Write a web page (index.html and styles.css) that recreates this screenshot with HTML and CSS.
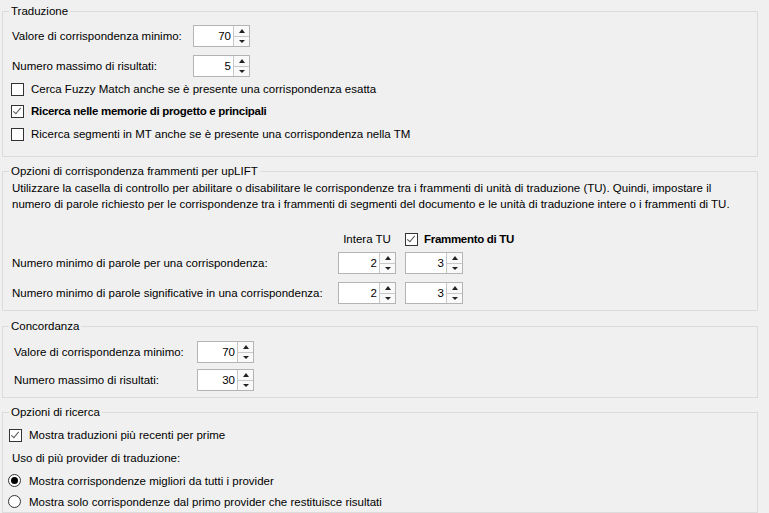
FILE: index.html
```html
<!DOCTYPE html>
<html lang="it">
<head>
    <meta charset="UTF-8">
    <title>Opzioni di ricerca</title>
    <link rel="stylesheet" href="styles.css">
</head>
<body>
    <fieldset class="group grp-trad">
        <legend>Traduzione</legend>
        <div class="field-row first">
            <span class="lbl lbl-trad">Valore di corrispondenza minimo:</span>
            <div class="spin"><span class="spin-val">70</span><span class="spin-btns"><span class="btn"><i class="up"></i></span><span class="btn"><i class="down"></i></span></span></div>
        </div>
        <div class="field-row">
            <span class="lbl lbl-trad">Numero massimo di risultati:</span>
            <div class="spin"><span class="spin-val">5</span><span class="spin-btns"><span class="btn"><i class="up"></i></span><span class="btn"><i class="down"></i></span></span></div>
        </div>
        <div class="checks">
            <label class="check"><span class="box"></span>Cerca Fuzzy Match anche se è presente una corrispondenza esatta</label>
            <label class="check bold"><span class="box on"></span>Ricerca nelle memorie di progetto e principali</label>
            <label class="check"><span class="box"></span>Ricerca segmenti in MT anche se è presente una corrispondenza nella TM</label>
        </div>
    </fieldset>

    <fieldset class="group grp-uplift">
        <legend>Opzioni di corrispondenza frammenti per upLIFT</legend>
        <p class="note">Utilizzare la casella di controllo per abilitare o disabilitare le corrispondenze tra i frammenti di unità di traduzione (TU). Quindi, impostare il<br>numero di parole richiesto per le corrispondenze tra i frammenti di segmenti del documento e le unità di traduzione intere o i frammenti di TU.</p>
        <div class="head-row">
            <span class="lbl lbl-up"></span>
            <span class="col-head">Intera TU</span>
            <label class="check bold col-check"><span class="box on"></span>Frammento di TU</label>
        </div>
        <div class="field-row up-row row-a">
            <span class="lbl lbl-up">Numero minimo di parole per una corrispondenza:</span>
            <div class="spin wide"><span class="spin-val">2</span><span class="spin-btns"><span class="btn"><i class="up"></i></span><span class="btn"><i class="down"></i></span></span></div>
            <div class="spin wide"><span class="spin-val">3</span><span class="spin-btns"><span class="btn"><i class="up"></i></span><span class="btn"><i class="down"></i></span></span></div>
        </div>
        <div class="field-row up-row row-b">
            <span class="lbl lbl-up">Numero minimo di parole significative in una corrispondenza:</span>
            <div class="spin wide"><span class="spin-val">2</span><span class="spin-btns"><span class="btn"><i class="up"></i></span><span class="btn"><i class="down"></i></span></span></div>
            <div class="spin wide"><span class="spin-val">3</span><span class="spin-btns"><span class="btn"><i class="up"></i></span><span class="btn"><i class="down"></i></span></span></div>
        </div>
    </fieldset>

    <fieldset class="group grp-conc">
        <legend>Concordanza</legend>
        <div class="field-row first">
            <span class="lbl lbl-conc">Valore di corrispondenza minimo:</span>
            <div class="spin"><span class="spin-val">70</span><span class="spin-btns"><span class="btn"><i class="up"></i></span><span class="btn"><i class="down"></i></span></span></div>
        </div>
        <div class="field-row second">
            <span class="lbl lbl-conc">Numero massimo di risultati:</span>
            <div class="spin"><span class="spin-val">30</span><span class="spin-btns"><span class="btn"><i class="up"></i></span><span class="btn"><i class="down"></i></span></span></div>
        </div>
    </fieldset>

    <fieldset class="group grp-search">
        <legend>Opzioni di ricerca</legend>
        <label class="check search-check"><span class="box on"></span>Mostra traduzioni più recenti per prime</label>
        <div class="sub-title">Uso di più provider di traduzione:</div>
        <label class="radio"><span class="dot on"></span>Mostra corrispondenze migliori da tutti i provider</label>
        <label class="radio"><span class="dot"></span>Mostra solo corrispondenze dal primo provider che restituisce risultati</label>
    </fieldset>
</body>
</html>
```

FILE: styles.css
```css
html, body {
    margin: 0;
    height: 513px;
    overflow: hidden;
}
body {
    background-color: #f0f0f0;
    color: #000;
    font-family: "Liberation Sans", Arial, sans-serif;
    font-size: 11.5px;
    padding-top: 3px;
    box-sizing: border-box;
}
.group {
    margin: 0 11px 0 2px;
    padding: 0 8px 0 9px;
    border: 1px solid #dcdcdc;
    min-width: 0;
}
.group legend {
    margin-left: -3px;
    padding: 0 2px;
    line-height: 17px;
    height: 16px;
}
.field-row {
    display: flex;
    align-items: center;
    height: 22px;
    margin-top: 8px;
}
.field-row.first {
    margin-top: 6px;
}
.lbl {
    flex: none;
    line-height: 16px;
}
.lbl-trad { width: 181px; }
.lbl-up { width: 326px; }
.lbl-conc { width: 183px; padding-left: 2px; }

/* spinner */
.spin {
    flex: none;
    display: flex;
    width: 57px;
    height: 22px;
    box-sizing: border-box;
    border: 1px solid #b4b4b4;
    background: #fff;
}
.spin.wide {
    width: 58px;
}
.spin.wide + .spin.wide {
    margin-left: 9px;
}
.spin-val {
    flex: 1;
    text-align: right;
    padding-right: 2px;
    line-height: 20px;
}
.spin-btns {
    width: 15px;
    display: flex;
    flex-direction: column;
    border-left: 1px solid #c8c8c8;
}
.btn {
    flex: 1;
    display: flex;
    align-items: center;
    justify-content: center;
    background: #f9f9f9;
}
.btn + .btn {
    border-top: 1px solid #c8c8c8;
}
.up, .down {
    width: 0;
    height: 0;
    border-left: 3.5px solid transparent;
    border-right: 3.5px solid transparent;
}
.up { border-bottom: 4px solid #222; }
.down { border-top: 3px solid #222; }

/* checkbox / radio */
.checks {
    padding-bottom: 13px;
}
.check, .radio {
    display: flex;
    align-items: center;
    height: 22px;
    margin-left: -1px;
}
.checks .check:first-child {
    margin-top: 1px;
}
.checks .check:last-child {
    margin-top: 1px;
}
.checks {
    padding-bottom: 11px;
}
.check.bold {
    font-weight: bold;
    letter-spacing: -0.3px;
}
.box {
    flex: none;
    width: 13px;
    height: 13px;
    box-sizing: border-box;
    border: 1px solid #333;
    background: #fff;
    margin-right: 7px;
    position: relative;
}
.box.on::after {
    content: "";
    position: absolute;
    left: 3px;
    top: 0px;
    width: 3px;
    height: 7px;
    border-right: 1.3px solid #555;
    border-bottom: 1.3px solid #555;
    transform: rotate(40deg);
}
.dot {
    flex: none;
    width: 13px;
    height: 13px;
    box-sizing: border-box;
    border: 1px solid #333;
    border-radius: 50%;
    background: #fff;
    margin-right: 8px;
    display: flex;
    align-items: center;
    justify-content: center;
}
.dot.on::after {
    content: "";
    width: 7px;
    height: 7px;
    border-radius: 50%;
    background: #000;
}

/* upLIFT */
.grp-uplift {
    margin-top: 6px;
    padding-bottom: 6px;
}
.note {
    margin: 1px 0 0;
    line-height: 16px;
    white-space: nowrap;
}
.head-row {
    display: flex;
    align-items: center;
    height: 16px;
    margin-top: 19px;
}
.col-head {
    width: 58px;
    text-align: center;
}
.col-check {
    margin-left: 9px;
    height: 16px;
}
.col-check .box {
    margin-right: 6px;
}
.up-row.row-a {
    margin-top: 5px;
}
.up-row.row-b {
    margin-top: 8px;
}

/* concordanza */
.grp-conc {
    margin-top: 7px;
    padding-bottom: 6px;
}
.grp-conc .first {
    margin-top: 7px;
}
.grp-conc .second {
    margin-top: 6px;
}

/* ricerca */
.grp-search {
    margin-top: 6px;
    padding-bottom: 0;
}
.search-check {
    margin-top: 4px;
    margin-left: -3px;
}
.sub-title {
    line-height: 16px;
    margin-top: 4px;
}
.radio {
    margin-left: -4px;
    height: 21px;
}
.sub-title + .radio {
    margin-top: 4px;
}
```
